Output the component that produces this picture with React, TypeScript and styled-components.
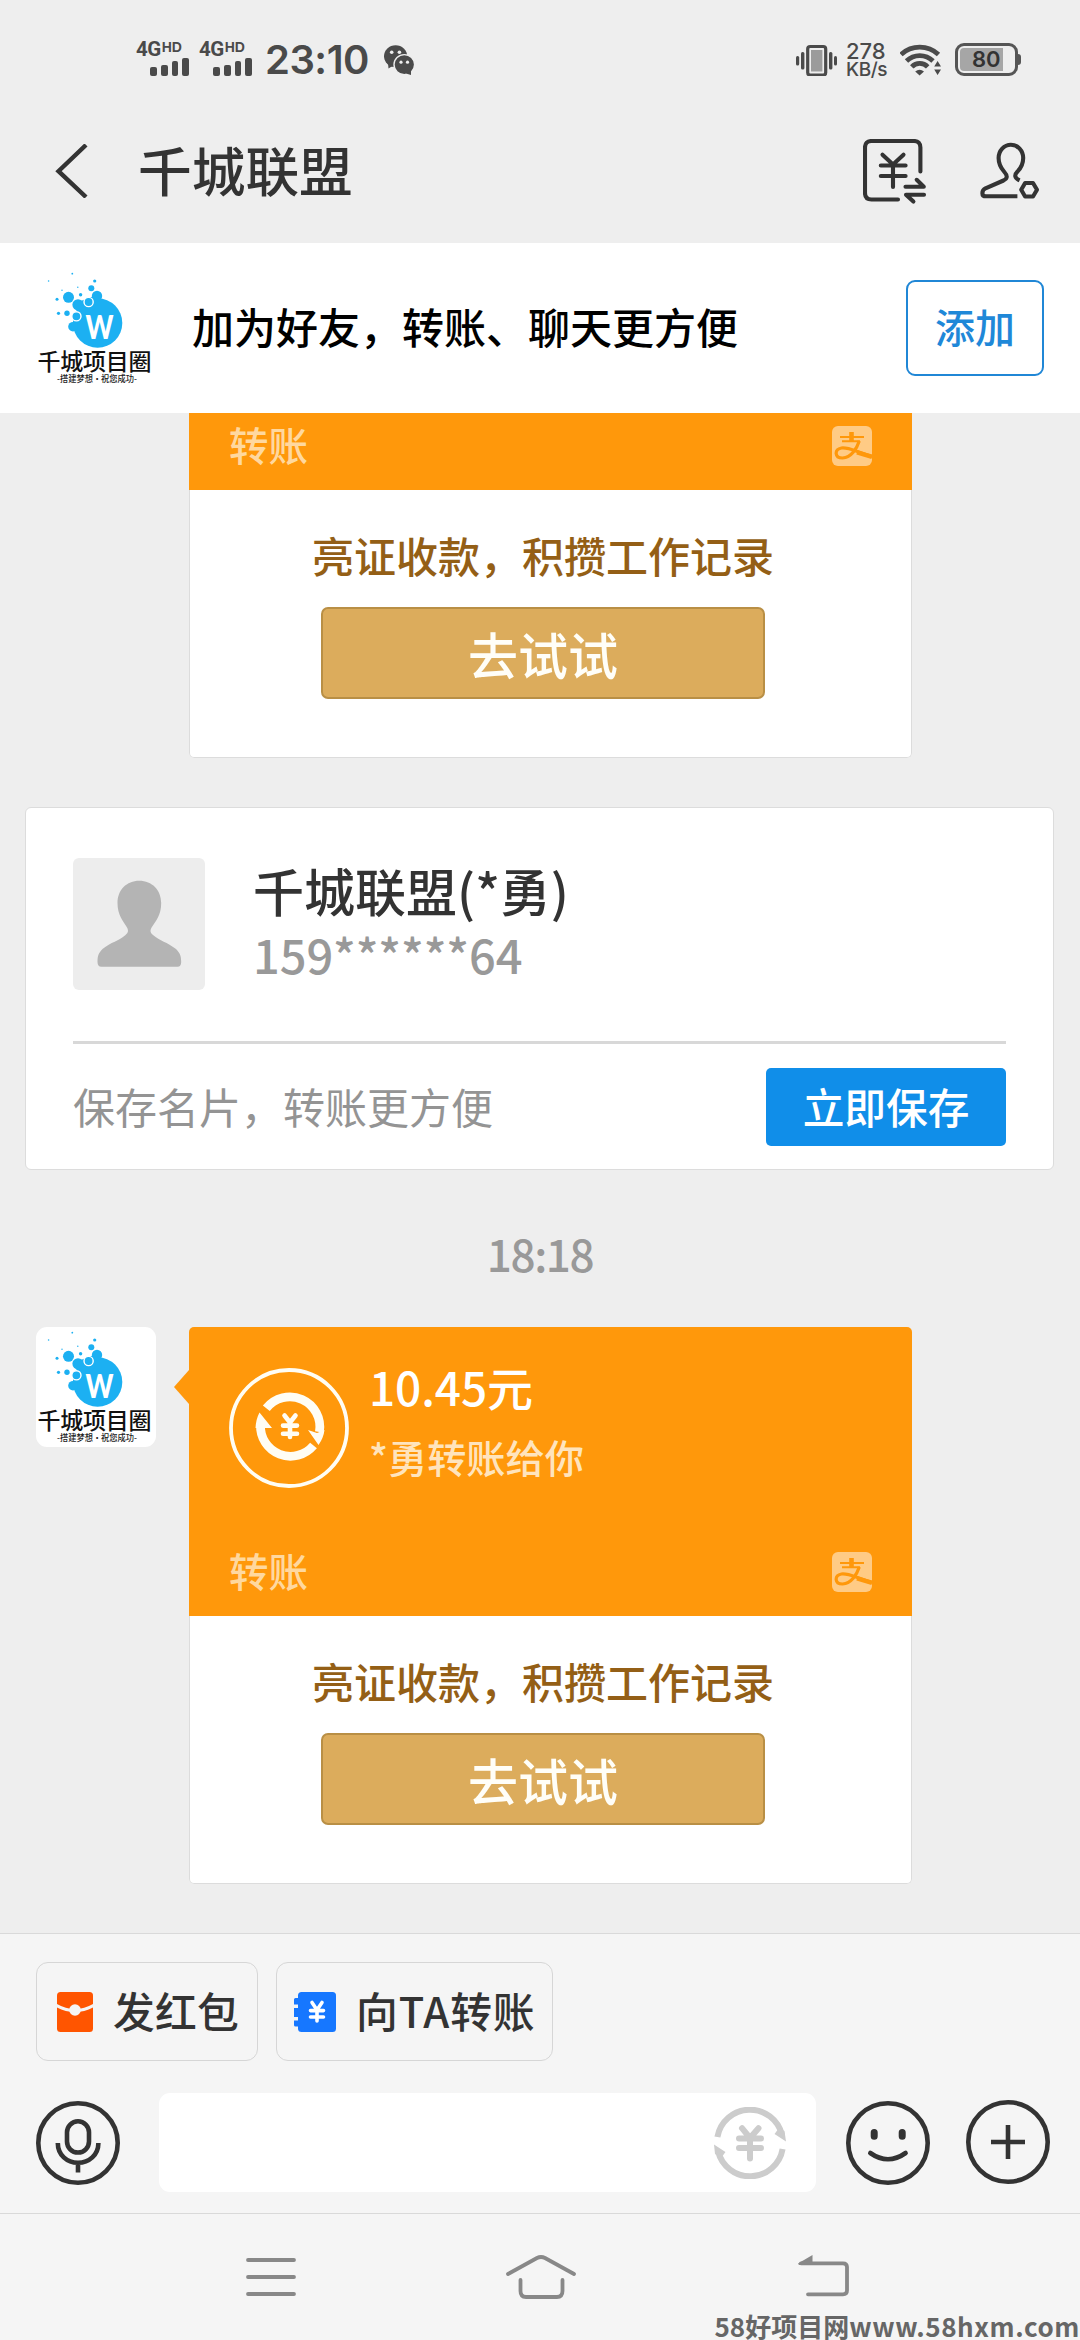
import React from "react";
import styled, { createGlobalStyle } from "styled-components";

const FONT = '"Noto Sans CJK SC", "Noto Sans", sans-serif';

const GlobalStyle = createGlobalStyle`
  * { box-sizing: border-box; }
  html, body { margin: 0; padding: 0; }
  body { background: #eee; font-family: ${FONT}; font-weight: 500; color: #333; }
  svg { display: block; flex: none; }
`;

const Screen = styled.div`
  width: 1080px;
  height: 2340px;
  display: flex;
  flex-direction: column;
  overflow: hidden;
  background: #eee;
`;

/* ---------- status bar ---------- */
const StatusBar = styled.div`
  height: 90px;
  padding: 42px 59px 0 136px;
  display: flex;
  justify-content: space-between;
  color: #4a4a4a;
`;
const StatusGroup = styled.div`
  display: flex;
  height: 36px;
  align-items: flex-start;
`;
const Signal = styled.div`
  width: 63px;
  display: flex;
  flex-direction: column;
`;
const SignalLabel = styled.div`
  display: flex;
  align-items: flex-start;
  height: 16px;
  font: 700 20.5px/15px "Roboto", sans-serif;
  letter-spacing: -0.5px;
`;
const SignalSup = styled.span`
  font: 700 14px/10px "Liberation Sans", sans-serif;
  letter-spacing: 0;
  margin-left: 1px;
`;
const SignalBars = styled.div`
  display: flex;
  align-items: flex-end;
  gap: 4px;
  height: 18px;
  margin-left: 14px;
`;
const SignalBar = styled.i<{ $h: number }>`
  width: 6.8px;
  height: ${(p) => p.$h}px;
  border-radius: 2px;
  background: #4a4a4a;
`;
const Clock = styled.div`
  width: 122px;
  padding-left: 3px;
  font: 600 40px/35px "Inter", sans-serif;
  letter-spacing: -0.5px;
`;
const Rate = styled.div`
  width: 53px;
  padding-left: 9px;
  font: 500 22px/19px "Inter", sans-serif;
  white-space: nowrap;
`;
const RateUnit = styled.div`
  font-size: 19px;
  line-height: 17px;
  letter-spacing: -0.4px;
`;
const Battery = styled.div`
  display: flex;
  align-items: center;
  margin: 1px 0 0 13px;
`;
const BatteryBody = styled.div`
  width: 63px;
  height: 33px;
  padding: 2px;
  border: 3px solid #555;
  border-radius: 9px;
`;
const BatteryLevel = styled.div`
  width: 43px;
  height: 23px;
  border-radius: 4px 0 0 4px;
  background: #a6a6a6;
  color: #333;
  font: 600 22px/23px "Inter", sans-serif;
  padding-left: 12px;
`;
const BatteryCap = styled.div`
  width: 3px;
  height: 11px;
  border-radius: 0 3px 3px 0;
  background: #555;
`;

/* ---------- header ---------- */
const Header = styled.header`
  height: 153px;
  padding: 0 40px 0 55px;
  display: flex;
  align-items: flex-start;
`;
const Title = styled.h1`
  flex: 1;
  margin: 37px 0 0 48px;
  font-size: 53.7px;
  line-height: 84px;
  height: 84px;
  font-weight: 500;
  color: #333;
`;
const HeaderIcons = styled.div`
  display: flex;
  align-items: flex-start;
  gap: 51px;
  margin-top: 49px;
`;

/* ---------- add-friend banner ---------- */
const Banner = styled.section`
  height: 170px;
  flex: none;
  padding: 0 36px;
  display: flex;
  align-items: center;
  background: #fff;
`;
const BannerText = styled.p`
  flex: 1;
  margin: 0 0 5px 36px;
  font-size: 42px;
  line-height: 60px;
  color: #000;
`;
const AddButton = styled.button`
  width: 138px;
  height: 96px;
  padding: 0 0 5px;
  border: 2px solid #2087d6;
  border-radius: 9px;
  background: #fff;
  color: #1f88d8;
  font: 500 40px/58px ${FONT};
`;

/* ---------- conversation ---------- */
const Conversation = styled.main`
  height: 1520px;
  flex: none;
  overflow: hidden;
  display: flex;
  flex-direction: column;
  justify-content: flex-end;
  padding-bottom: 49px;
`;
const MessageRow = styled.div<{ $indent: number }>`
  display: flex;
  flex: none;
  align-items: flex-start;
  padding-left: ${(p) => p.$indent}px;
`;
const AvatarFrame = styled.div`
  width: 120px;
  height: 120px;
  border-radius: 11px;
  overflow: hidden;
  background: #fff;
`;
const Tail = styled.div`
  width: 0;
  height: 0;
  margin: 43px 0 0 18px;
  border: solid transparent;
  border-width: 17px 15px 17px 0;
  border-right-color: #ff980b;
`;
const TransferCard = styled.article<{ $round: number }>`
  width: 723px;
  display: flex;
  flex-direction: column;
  border-radius: ${(p) => p.$round}px ${(p) => p.$round}px 5px 5px;
  overflow: hidden;
`;
const CardTop = styled.div<{ $h: number }>`
  height: ${(p) => p.$h}px;
  padding: 0 40px;
  display: flex;
  flex-direction: column;
  justify-content: flex-end;
  background: #ff980b;
`;
const TransferInfo = styled.div`
  display: flex;
  height: 159px;
  gap: 20px;
`;
const Amount = styled.div`
  height: 59px;
  margin-top: -11px;
  font-size: 46px;
  line-height: 59px;
  letter-spacing: -0.1px;
  color: #fff;
`;
const Payer = styled.div`
  margin-top: 12px;
  font-size: 39.2px;
  line-height: 57px;
  color: #ffe4bd;
  white-space: nowrap;
`;
const CardFooter = styled.div`
  flex: none;
  display: flex;
  align-items: flex-start;
  justify-content: space-between;
  height: 64px;
`;
const FooterLabel = styled.span`
  margin-top: -11px;
  font-size: 39.5px;
  line-height: 58px;
  color: #ffd89f;
`;
const CardBottom = styled.div`
  height: 268px;
  display: flex;
  flex-direction: column;
  align-items: center;
  background: #fff;
  border: 1px solid #dcdcdc;
  border-top: 0;
  border-radius: 0 0 5px 5px;
  padding-right: 15px;
`;
const Promo = styled.p`
  margin: 34px 0 22px;
  font-size: 42px;
  line-height: 61px;
  color: #945f16;
`;
const TryButton = styled.button`
  width: 444px;
  height: 92px;
  padding: 0 0 1px;
  border: 2px solid #b98f45;
  border-radius: 7px;
  background: #dcac5c;
  color: #fffef8;
  font: 500 50px/84px ${FONT};
`;

const ContactCard = styled.article`
  flex: none;
  width: 1029px;
  height: 363px;
  margin: 49px 25px 0;
  padding: 50px 47px 0 47px;
  background: #fff;
  border: 1px solid #dcdcdc;
  border-radius: 6px;
`;
const ContactHead = styled.div`
  display: flex;
  height: 183px;
  gap: 48px;
`;
const ContactAvatar = styled.div`
  width: 132px;
  height: 132px;
  border-radius: 6px;
  overflow: hidden;
  background: #ededed;
`;
const ContactName = styled.div`
  margin-top: -3px;
  font-size: 51px;
  line-height: 70px;
  height: 69px;
  color: #333;
`;
const ContactPhone = styled.div`
  font-size: 47px;
  line-height: 60px;
  letter-spacing: -0.1px;
  color: #999;
`;
const ContactFoot = styled.div`
  display: flex;
  align-items: flex-start;
  justify-content: space-between;
  padding-top: 24px;
  border-top: 3px solid #d8d8d8;
`;
const ContactHint = styled.span`
  font-size: 42px;
  line-height: 75px;
  font-weight: 400;
  color: #949494;
`;
const SaveButton = styled.button`
  width: 240px;
  height: 78px;
  padding: 0 0 2px;
  border: 0;
  border-radius: 5px;
  background: #108ee9;
  color: #fff;
  font: 500 41.7px/74px ${FONT};
`;
const TimeStamp = styled.time`
  height: 157px;
  flex: none;
  font-size: 44px;
  line-height: 167px;
  letter-spacing: -1.4px;
  text-align: center;
  color: #999;
`;

/* ---------- composer ---------- */
const Composer = styled.footer`
  height: 281px;
  flex: none;
  padding: 28px 30px 0 36px;
  background: #f5f5f5;
  border-top: 1px solid #d9d9d9;
  border-bottom: 1px solid #d9d9d9;
`;
const ChipRow = styled.div`
  display: flex;
  gap: 18px;
`;
const Chip = styled.button<{ $w: number; $pad: number }>`
  width: ${(p) => p.$w}px;
  height: 99px;
  padding: 0 0 0 ${(p) => p.$pad}px;
  display: flex;
  align-items: center;
  gap: 20px;
  border: 1px solid #d6d6d6;
  border-radius: 12px;
  background: transparent;
  color: #333;
`;
const ChipLabel = styled.span<{ $spacing: number }>`
  margin-bottom: 3px;
  font: 500 41.8px/60px ${FONT};
  letter-spacing: ${(p) => p.$spacing}px;
  white-space: nowrap;
`;
const InputRow = styled.div`
  display: flex;
  align-items: center;
  margin-top: 32px;
`;
const InputBox = styled.div`
  width: 657px;
  height: 99px;
  margin: 0 30px 0 39px;
  padding-right: 30px;
  display: flex;
  align-items: center;
  justify-content: flex-end;
  border-radius: 11px;
  background: #fff;
`;
const PlusSlot = styled.div`
  margin: 0 0 2px 36px;
`;

/* ---------- navigation bar ---------- */
const NavBar = styled.nav`
  position: relative;
  flex: 1;
  display: flex;
  align-items: flex-start;
  padding: 41px 0 0 246px;
  background: #f5f5f5;
`;
const NavSlot = styled.span<{ $gap: number }>`
  margin-left: ${(p) => p.$gap}px;
`;
const Watermark = styled.div`
  position: absolute;
  right: 0;
  bottom: -4px;
  font-size: 26px;
  line-height: 36px;
  font-weight: 700;
  color: #666;
  display: flex;
  white-space: nowrap;
`;
const WatermarkUrl = styled.span`
  letter-spacing: 0.6px;
`;

/* ---------- drawings ---------- */
const dots: [number, number, number][] = [
  [61, 28, 5.2], [55.3, 20.3, 3], [58.7, 13, 1.6], [32.5, 29.3, 5.5], [44.6, 26.7, 1.7],
  [42, 36.8, 5.6], [31, 45.3, 2.7], [22.5, 45.3, 1.6], [21, 31.3, 1.5], [12.6, 13, 0.8],
  [36.3, 5.7, 0.9], [26, 22.3, 0.7], [41.8, 19.3, 0.7], [37, 58.7, 4.8],
];

const BrandLogo = () => (
  <svg width="120" height="120" viewBox="0 0 120 120">
    <g fill="#1cb0f2">
      <circle cx="61.6" cy="55" r="24.7" />
      <path d="M42 34 L58 28 L60 40 L44 52 L38 61 L34 60 L42 44Z" />
      {dots.map(([x, y, r]) => (
        <circle key={`${x}-${y}`} cx={x} cy={y} r={r} />
      ))}
      <circle cx="52.6" cy="34" r="4.6" stroke="#fff" strokeWidth="1.4" />
      <circle cx="40.4" cy="48.3" r="4.6" stroke="#fff" strokeWidth="1.4" />
    </g>
    <text x="49.5" y="70.5" textLength="28" lengthAdjust="spacingAndGlyphs" fontFamily="Lato, sans-serif" fontWeight="900" fontSize="33" fill="#fff">W</text>
    <text x="1.5" y="101.5" textLength="114" fontFamily={FONT} fontWeight="500" fontSize="23" fill="#111">千城项目圈</text>
    <text x="21" y="114" textLength="80" lengthAdjust="spacingAndGlyphs" fontFamily={FONT} fontWeight="500" fontSize="8.6" fill="#222">-搭建梦想·祝您成功-</text>
  </svg>
);

const Vibrate = () => (
  <svg width="41" height="34" viewBox="0 -3 41 34">
    <g fill="#4a4a4a">
      <rect x="0" y="11" width="3.2" height="9.5" rx="1.5" />
      <rect x="5" y="7" width="3.4" height="17.5" rx="1.5" />
      <rect x="33" y="7" width="3.4" height="17.5" rx="1.5" />
      <rect x="38" y="11" width="3" height="9.5" rx="1.5" />
    </g>
    <rect x="11.7" y="1.5" width="18" height="28.5" rx="2.5" fill="none" stroke="#4a4a4a" strokeWidth="3.2" />
    <rect x="15" y="5" width="11.4" height="21.5" fill="#9b9b9b" />
  </svg>
);

const WeChat = () => (
  <svg width="31" height="34" viewBox="0 -3 31 34">
    <g fill="#4a4a4a">
      <ellipse cx="11.6" cy="11.3" rx="11.6" ry="11" />
      <path d="M4 18 L4.5 23.5 L10 20Z" />
      <ellipse cx="20.3" cy="19.6" rx="10.3" ry="10" stroke="#eee" strokeWidth="1.4" />
      <path d="M22 28.5 L27 30 L27 25Z" />
    </g>
    <g fill="#eee">
      <circle cx="7.7" cy="7.3" r="1.8" />
      <circle cx="15.4" cy="7.3" r="1.8" />
      <circle cx="17" cy="17.2" r="1.6" />
      <circle cx="23.5" cy="17.2" r="1.6" />
    </g>
  </svg>
);

const Wifi = () => (
  <svg width="42" height="34" viewBox="0 -3 42 34">
    <g fill="none" stroke="#4a4a4a" strokeWidth="4.8">
      <path d="M1 9.5 A27.5 27.5 0 0 1 38.5 9.5" />
      <path d="M6.5 16 A19 19 0 0 1 33 16" />
      <path d="M11.8 21.8 A11 11 0 0 1 27.7 21.8" />
    </g>
    <path d="M15.2 26.5 Q19.6 23 24 26.5 L19.6 30.5Z" fill="#4a4a4a" />
    <path d="M37.6 16 L41 21.5 H34.2Z M37.6 30 L41 24.5 H34.2Z" fill="#4a4a4a" />
  </svg>
);

const BackSlot = styled.div`
  padding-top: 54px;
`;

const BackArrow = () => (
  <svg width="35" height="54" viewBox="0 0 35 54">
    <path d="M31 1 L3.5 27.2 L31 53" fill="none" stroke="#333" strokeWidth="4.4" />
  </svg>
);

const MoneySwap = () => (
  <svg width="65" height="66" viewBox="0 0 65 66">
    <g fill="none" stroke="#333" strokeWidth="4.1" strokeLinecap="round" strokeLinejoin="round">
      <path d="M57.4 32.5 V8.5 Q57.4 2 51 2 H8.5 Q2 2 2 8.5 V54 Q2 60.5 8.5 60.5 H35" />
      <path d="M19.5 15.7 L30 25.5 L40.5 15.7 M30 26 V48 M17.8 26.5 H42.6 M17.8 37 H42.6" />
      <path d="M42.5 47.7 H60.8 L53.7 40.8 M61 55.7 H43 L50.4 62.6" />
    </g>
  </svg>
);

const PersonSettings = () => (
  <svg width="61" height="63" viewBox="0 -3 61 63">
    <g fill="none" stroke="#333" strokeWidth="4.1" strokeLinejoin="round">
      <path d="M40.6 38.4 C35.5 36 35 33 38.5 29.5 C42.5 25.5 44.2 22 44.2 16 A12.3 13.3 0 0 0 19.6 16 C19.6 22 21.5 25.5 25 29.5 C29 34 28.5 36.5 24.5 38.5 L6.5 46.3 C2.5 48.5 2 54.3 7 54.3 H38.4" />
      <path d="M46.1 41 H54 L58 47.8 L54 54.5 H46.1 L42.2 47.8Z" />
    </g>
  </svg>
);

const AlipayBadge = () => (
  <svg width="40" height="40" viewBox="0 0 40 40">
    <rect width="40" height="40" rx="6" fill="#ffcb85" />
    <g fill="none" stroke="#ff980b">
      <path d="M19.5 6 V15" strokeWidth="4.6" />
      <path d="M8 11 H32 M10 15.2 H28" strokeWidth="2" />
      <path d="M27.3 15 C25 22 19.5 31.5 10.5 32 C2.5 32 2 23.5 9.5 22 C16 20.8 22 25 40 30.5" strokeWidth="3.2" />
      <path d="M25 26.3 L40 30.8" strokeWidth="4.4" />
    </g>
  </svg>
);

const TransferIcon = () => (
  <svg width="120" height="120" viewBox="0 0 120 120">
    <circle cx="60" cy="60" r="58" fill="none" stroke="#fffdf4" strokeWidth="3.8" />
    <g fill="none" stroke="#fffdf4" strokeWidth="8.8">
      <path d="M37.3 40.3 A30 30 0 0 1 90.4 64" />
      <path d="M84.5 77.5 A30 30 0 0 1 31.5 57" />
    </g>
    <path d="M79 62 L88 65 L95.5 62 Q94.5 70 89.5 77Z M30.5 44.5 L43 60 H26.5 Q27 51 30.5 44.5Z" fill="#fffdf4" />
    <path d="M55.5 47.5 L61 54.5 L66.5 47.5 M61 54.5 V69 M54 57.6 H68 M54 65.8 H68" fill="none" stroke="#fffdf4" strokeWidth="4.6" strokeLinecap="round" />
  </svg>
);

const Silhouette = () => (
  <svg width="132" height="132" viewBox="0 0 132 132">
    <path d="M66.3 22.7 C79 22.7 88.2 32 88.2 45 C88.2 57 83 63 78.6 69.5 C77 72.5 77 74.5 80 77 C87 83 94 84 103 91 C107 95 108.2 98 108.2 104 Q108.2 108.7 104.5 108.7 H28.3 Q24.5 108.7 24.5 104 C24.5 98 25.5 95 29.5 91 C38 84 46 83 52.5 77 C55.5 74.5 55.5 72.5 54 69.5 C50 63 44.5 57 44.5 45 C44.5 32 53.5 22.7 66.3 22.7Z" fill="#b4b4b4" />
  </svg>
);

const RedPacket = () => (
  <svg width="36" height="40" viewBox="0 0 36 40">
    <rect width="36" height="40" rx="3.5" fill="#ff5500" />
    <path d="M-1 13.2 Q8 18.5 18 18.5 T37 13.2" fill="none" stroke="#f5f5f5" strokeWidth="3" />
    <circle cx="18" cy="18" r="5.8" fill="#f5f5f5" />
  </svg>
);

const TransferBook = () => (
  <svg width="42" height="40" viewBox="0 0 42 40">
    <rect x="4" width="38" height="40" rx="3.5" fill="#1677ff" />
    <path d="M5 6 H1.5 Q0 6 0 7.5 V12.5 H5Z M0 16 H5 V25 H0Z M5 28.5 H0 V33 Q0 34.5 1.5 34.5 H5Z" fill="#1677ff" />
    <path d="M18 10.5 L23 18 L28 10.5 M23 18 V29 M16.5 18.6 H29.5 M16.5 25 H29.5" fill="none" stroke="#fff" strokeWidth="3.6" strokeLinecap="round" />
  </svg>
);

const Round = ({ children }: { children: React.ReactNode }) => (
  <svg width="84" height="84" viewBox="0 0 84 84">
    <g fill="none" stroke="#333" strokeWidth="4.6">
      <circle cx="42" cy="42" r="39.7" />
      {children}
    </g>
  </svg>
);

const MoneyCycle = () => (
  <svg width="72" height="72" viewBox="0 0 72 72">
    <g fill="none" stroke="#ccc" strokeWidth="6">
      <path d="M3.4 30 A33 33 0 0 1 68 28" />
      <path d="M68.6 42 A33 33 0 0 1 4 44" />
      <path d="M28 21.2 L36 31 L44.5 21.2 M36 31 V51.5 M25 31.5 H47 M25 41 H47" strokeLinecap="round" />
    </g>
    <path d="M60.5 27 L65 21 L70.5 24 L72 34.5Z M0 37.5 L11.5 45 L7 51 L1 47Z" fill="#ccc" />
  </svg>
);

const NavIcon = ({ w, h, d, fill }: { w: number; h: number; d: string; fill?: string }) => (
  <svg width={w} height={h} viewBox={`0 0 ${w} ${h}`}>
    <path d={d} fill="none" stroke="#888" strokeWidth="3.8" strokeLinecap="round" strokeLinejoin="round" />
    {fill && <path d={fill} fill="#888" />}
  </svg>
);

const SignalMeter = () => (
  <Signal>
    <SignalLabel>
      4G<SignalSup>HD</SignalSup>
    </SignalLabel>
    <SignalBars>
      {[9.5, 11.5, 15, 18].map((h) => (
        <SignalBar key={h} $h={h} />
      ))}
    </SignalBars>
  </Signal>
);

/* A scrolled message keeps only the footer strip of its orange header. */
const TransferMessage = ({ scrolled = false }: { scrolled?: boolean }) => (
  <MessageRow $indent={scrolled ? 189 : 36}>
    {!scrolled && (
      <>
        <AvatarFrame>
          <BrandLogo />
        </AvatarFrame>
        <Tail />
      </>
    )}
    <TransferCard $round={scrolled ? 0 : 5}>
      <CardTop $h={scrolled ? 77 : 289}>
        {!scrolled && (
          <TransferInfo>
            <TransferIcon />
            <div>
              <Amount>10.45元</Amount>
              <Payer>*勇转账给你</Payer>
            </div>
          </TransferInfo>
        )}
        <FooterGap $h={scrolled ? 0 : 25} />
        <CardFooter>
          <FooterLabel>转账</FooterLabel>
          <AlipayBadge />
        </CardFooter>
      </CardTop>
      <CardBottom>
        <Promo>亮证收款，积攒工作记录</Promo>
        <TryButton>去试试</TryButton>
      </CardBottom>
    </TransferCard>
  </MessageRow>
);

const FooterGap = styled.div<{ $h: number }>`
  height: ${(p) => p.$h}px;
`;

export default function App() {
  return (
    <Screen>
      <GlobalStyle />
      <StatusBar>
        <StatusGroup>
          <SignalMeter />
          <SignalMeter />
          <Clock>23:10</Clock>
          <WeChat />
        </StatusGroup>
        <StatusGroup>
          <Vibrate />
          <Rate>
            278
            <RateUnit>KB/s</RateUnit>
          </Rate>
          <NavSlot $gap={10}>
            <Wifi />
          </NavSlot>
          <Battery>
            <BatteryBody>
              <BatteryLevel>80</BatteryLevel>
            </BatteryBody>
            <BatteryCap />
          </Battery>
        </StatusGroup>
      </StatusBar>
      <Header>
        <BackSlot>
          <BackArrow />
        </BackSlot>
        <Title>千城联盟</Title>
        <HeaderIcons>
          <MoneySwap />
          <PersonSettings />
        </HeaderIcons>
      </Header>
      <Banner>
        <BrandLogo />
        <BannerText>加为好友，转账、聊天更方便</BannerText>
        <AddButton>添加</AddButton>
      </Banner>
      <Conversation>
        <TransferMessage scrolled />
        <ContactCard>
          <ContactHead>
            <ContactAvatar>
              <Silhouette />
            </ContactAvatar>
            <div>
              <ContactName>千城联盟(*勇)</ContactName>
              <ContactPhone>159******64</ContactPhone>
            </div>
          </ContactHead>
          <ContactFoot>
            <ContactHint>保存名片，转账更方便</ContactHint>
            <SaveButton>立即保存</SaveButton>
          </ContactFoot>
        </ContactCard>
        <TimeStamp>18:18</TimeStamp>
        <TransferMessage />
      </Conversation>
      <Composer>
        <ChipRow>
          <Chip $w={222} $pad={20}>
            <RedPacket />
            <ChipLabel $spacing={0.2}>发红包</ChipLabel>
          </Chip>
          <Chip $w={277} $pad={17}>
            <TransferBook />
            <ChipLabel $spacing={0.9}>向TA转账</ChipLabel>
          </Chip>
        </ChipRow>
        <InputRow>
          <Round>
            <rect x="31" y="20.3" width="22" height="31.2" rx="11" />
            <path d="M21.8 42 C21.8 54 31 61.8 42 61.8 C53 61.8 62.4 54 62.4 42 M42 62 V71.5" />
          </Round>
          <InputBox>
            <MoneyCycle />
          </InputBox>
          <Round>
            <path d="M28.2 31.5 V35.3 M56.2 31.5 V35.3" strokeWidth="7" strokeLinecap="round" />
            <path d="M24.3 52 Q42 64.5 59.6 52" strokeLinecap="round" />
          </Round>
          <PlusSlot>
            <Round>
              <path d="M42 25 V59 M25 42 H59" />
            </Round>
          </PlusSlot>
        </InputRow>
      </Composer>
      <NavBar>
        <NavIcon w={50} h={43} d="M2 5 H48 M2 22 H48 M2 39 H48" />
        <NavSlot $gap={210}>
          <NavIcon w={70} h={44} d="M2 19 L31 3 Q35 1 39 3 L68 19 M14.5 25 V36 Q14.5 42 20 42 H51 Q56.5 42 56.5 36 V25" />
        </NavSlot>
        <NavSlot $gap={222}>
          <NavIcon w={52} h={42} d="M3 8.3 H45 Q49 8.3 49 12 V35.5 Q49 39.3 45 39.3 H10" fill="M0 8.5 L14.5 0 V10 H1Z" />
        </NavSlot>
        <Watermark>
          58好项目网<WatermarkUrl>www.58hxm.com</WatermarkUrl>
        </Watermark>
      </NavBar>
    </Screen>
  );
}
